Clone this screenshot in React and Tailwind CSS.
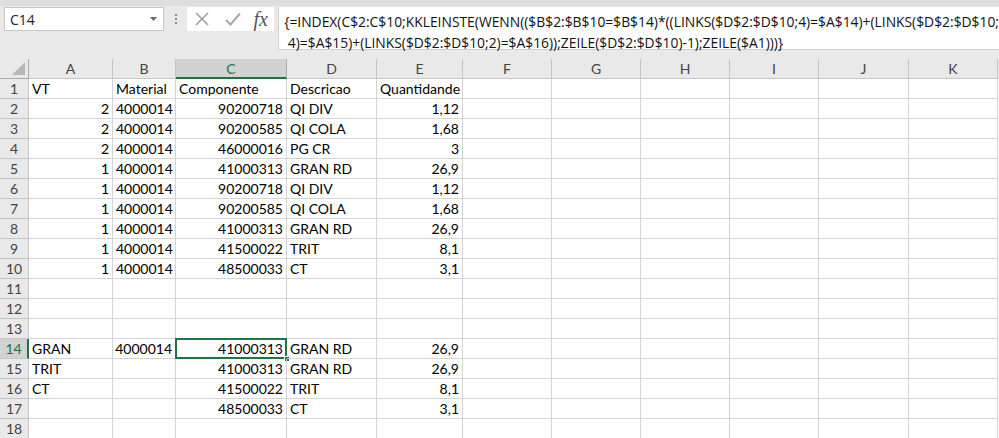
import React from 'react';

const COLS = [
  { key: 'A', w: 84 },
  { key: 'B', w: 63 },
  { key: 'C', w: 111 },
  { key: 'D', w: 90 },
  { key: 'E', w: 86 },
  { key: 'F', w: 89 },
  { key: 'G', w: 89 },
  { key: 'H', w: 89 },
  { key: 'I', w: 89 },
  { key: 'J', w: 90 },
  { key: 'K', w: 89 },
];

// each row: [A, B, C, D, E] ; a leading '>' means right-aligned
const ROWS = [
  ['VT', 'Material', 'Componente', 'Descricao', 'Quantidande'],
  ['>2', '4000014', '>90200718', 'QI DIV', '>1,12'],
  ['>2', '4000014', '>90200585', 'QI COLA', '>1,68'],
  ['>2', '4000014', '>46000016', 'PG CR', '>3'],
  ['>1', '4000014', '>41000313', 'GRAN RD', '>26,9'],
  ['>1', '4000014', '>90200718', 'QI DIV', '>1,12'],
  ['>1', '4000014', '>90200585', 'QI COLA', '>1,68'],
  ['>1', '4000014', '>41000313', 'GRAN RD', '>26,9'],
  ['>1', '4000014', '>41500022', 'TRIT', '>8,1'],
  ['>1', '4000014', '>48500033', 'CT', '>3,1'],
  [],
  [],
  [],
  ['GRAN', '>4000014', '>41000313', 'GRAN RD', '>26,9'],
  ['TRIT', '', '>41000313', 'GRAN RD', '>26,9'],
  ['CT', '', '>41500022', 'TRIT', '>8,1'],
  ['', '', '>48500033', 'CT', '>3,1'],
  [],
];

const cellFont = { fontFamily: 'Lato, "Open Sans", sans-serif' };

const FormulaBar = () => (
  <div className="h-[59px] bg-[#e9e9e9] relative" style={{ fontFamily: '"Open Sans", "Noto Sans", sans-serif' }}>
    <div className="h-[6px] bg-[#dedede]" />
    <div className="flex items-start pt-px">
      <div className="ml-[4px] w-[160px] h-[24px] bg-white border border-[#c6c6c6] flex items-center justify-between pl-[5px] pr-[6px]">
        <span className="text-[14px] text-[#222]">C14</span>
        <svg width="7" height="4" viewBox="0 0 7 4"><path d="M0 0h7L3.5 4z" fill="#666" /></svg>
      </div>
      <div className="w-[24px] h-[24px] flex flex-col items-center justify-center gap-[2px]">
        <span className="w-[2px] h-[2px] bg-[#8a8a8a]" />
        <span className="w-[2px] h-[2px] bg-[#8a8a8a]" />
        <span className="w-[2px] h-[2px] bg-[#8a8a8a]" />
      </div>
      <div className="w-[87px] h-[24px] bg-white flex items-center">
        <svg className="ml-[8px]" width="14" height="14" viewBox="0 0 14 14">
          <path d="M1 1L13 13M13 1L1 13" stroke="#9e9e9e" strokeWidth="1.6" fill="none" />
        </svg>
        <svg className="ml-[16px]" width="16" height="14" viewBox="0 0 16 14">
          <path d="M1 8L5.5 12.5L15 1.5" stroke="#a8a8a8" strokeWidth="2" fill="none" />
        </svg>
        <span className="ml-[12px] text-[20px] italic text-[#555] leading-none" style={{ fontFamily: '"Liberation Serif", serif' }}>fx</span>
      </div>
      <div className="ml-[4px] flex-1 h-[43px] bg-white border-l border-b border-[#d0d0d0] pl-[5px] pt-[4px] text-[13.85px] leading-[22px] text-[#111]">
        <div className="whitespace-pre">{'{=INDEX(C$2:C$10;KKLEINSTE(WENN(($B$2:$B$10=$B$14)*((LINKS($D$2:$D$10;4)=$A$14)+(LINKS($D$2:$D$10;'}</div>
        <div className="whitespace-pre -mt-[1px]">{' 4)=$A$15)+(LINKS($D$2:$D$10;2)=$A$16));ZEILE($D$2:$D$10)-1);ZEILE($A1)))}'}</div>
      </div>
    </div>
  </div>
);

const HeaderRow = () => (
  <div className="flex h-[20px] bg-[#e9e9e9]" style={cellFont}>
    <div className="w-[29px] h-full border-r border-b border-[#ababab] relative bg-[#e9e9e9]">
      <svg className="absolute right-[3px] bottom-[3px]" width="13" height="13" viewBox="0 0 13 13">
        <path d="M13 0V13H0z" fill="#b8b8b8" />
      </svg>
    </div>
    {COLS.map((c) => (
      <div
        key={c.key}
        style={{ width: c.w }}
        className={
          c.key === 'C'
            ? 'h-full bg-[#d2d2d2] border-r border-[#ababab] border-b-2 border-b-[#217346] flex items-center justify-center text-[14px] text-[#217346]'
            : 'h-full border-r border-b border-[#c6c6c6] flex items-center justify-center text-[14px] text-[#444]'
        }
      >
        {c.key}
      </div>
    ))}
  </div>
);

const Row = ({ n, data }) => {
  const active = n === 14;
  return (
    <div className="flex h-[20px]" style={cellFont}>
      <div
        className={
          active
            ? 'w-[29px] h-full bg-[#d2d2d2] border-r-2 border-r-[#217346] border-b border-b-[#c6c6c6] flex items-center justify-center text-[14px] text-[#217346]'
            : 'w-[29px] h-full bg-[#e9e9e9] border-r border-b border-[#c6c6c6] flex items-center justify-center text-[14px] text-[#444]'
        }
      >
        {n}
      </div>
      {COLS.map((c, i) => {
        const raw = data[i] || '';
        const right = raw.startsWith('>');
        const text = right ? raw.slice(1) : raw;
        const isActive = active && c.key === 'C';
        return (
          <div
            key={c.key}
            style={{ width: c.w }}
            className={
              'h-full border-r border-b border-[#d4d4d4] flex items-center px-[3px] text-[14px] text-black whitespace-nowrap relative ' +
              (right ? 'justify-end' : 'justify-start')
            }
          >
            {text}
            {isActive && (
              <>
                <div className="absolute -left-px -top-px -right-px -bottom-px border-2 border-[#217346] pointer-events-none" />
                <div className="absolute -right-[4px] -bottom-[4px] w-[6px] h-[6px] bg-[#217346] border border-white" />
              </>
            )}
          </div>
        );
      })}
    </div>
  );
};

export default function App() {
  return (
    <div className="w-[999px] h-[438px] overflow-hidden bg-white">
      <FormulaBar />
      <HeaderRow />
      {ROWS.map((r, i) => (
        <Row key={i} n={i + 1} data={r} />
      ))}
    </div>
  );
}
